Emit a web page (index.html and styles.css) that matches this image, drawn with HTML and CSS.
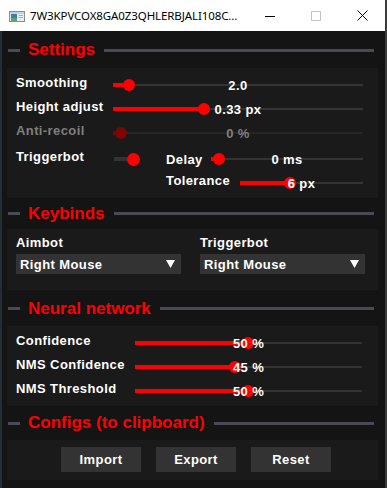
FILE: index.html
```html
<!DOCTYPE html>
<html lang="en">
<head>
  <meta charset="UTF-8">
  <title>7W3KPVCOX8GA0Z3QHLERBJALI108C</title>
  <link rel="stylesheet" href="styles.css">
</head>
<body>
  <div class="window">
    <!-- title bar -->
    <div class="titlebar">
      <svg class="app-icon" width="16" height="11" viewBox="0 0 16 11">
        <rect x="0.5" y="0.5" width="15" height="10" fill="#e8eef3" stroke="#8c8c8c" />
        <rect x="1" y="1" width="14" height="2" fill="#c9d3db" />
        <rect x="2" y="3" width="6" height="7" fill="#3f7fb0" />
        <rect x="2" y="7" width="6" height="3" fill="#5aa870" />
        <rect x="10" y="4" width="4" height="1" fill="#9fb2c2" />
        <rect x="10" y="6" width="4" height="1" fill="#9fb2c2" />
      </svg>
      <span class="title">7W3KPVCOX8GA0Z3QHLERBJALI108C...</span>
      <div class="caption">
        <span class="cap-btn">
          <svg width="10" height="10" viewBox="0 0 10 10"><path d="M0 5.5h10" stroke="#000" stroke-width="1" /></svg>
        </span>
        <span class="cap-btn">
          <svg width="10" height="10" viewBox="0 0 10 10"><rect x="0.5" y="0.5" width="9" height="9" fill="none" stroke="#c4c4c4" stroke-width="1" /></svg>
        </span>
        <span class="cap-btn">
          <svg width="11" height="11" viewBox="0 0 11 11"><path d="M0.5 0.5l10 10M10.5 0.5l-10 10" stroke="#000" stroke-width="1" /></svg>
        </span>
      </div>
    </div>

    <div class="client">
      <!-- Settings -->
      <div class="section-head head-settings"><span>Settings</span></div>
      <div class="panel settings">
        <div class="row">
          <span class="label">Smoothing</span>
          <div class="slider">
            <div class="fill" style="width:6.4%"></div>
            <span class="knob" style="left:6.4%"></span>
            <span class="value">2.0</span>
          </div>
        </div>
        <div class="row">
          <span class="label">Height adjust</span>
          <div class="slider">
            <div class="fill" style="width:36.4%"></div>
            <span class="knob" style="left:36.4%"></span>
            <span class="value">0.33 px</span>
          </div>
        </div>
        <div class="row disabled">
          <span class="label">Anti-recoil</span>
          <div class="slider">
            <div class="fill" style="width:3.2%"></div>
            <span class="knob" style="left:3.2%"></span>
            <span class="value">0 %</span>
          </div>
        </div>
        <div class="row row-trigger">
          <span class="label">Triggerbot</span>
          <div class="sub">
            <span class="toggle"><span class="toggle-knob"></span></span>
            <span class="sub-label delay">Delay</span>
            <div class="slider">
              <div class="fill" style="width:5.3%"></div>
              <span class="knob" style="left:5.3%"></span>
              <span class="value">0 ms</span>
            </div>
          </div>
        </div>
        <div class="row">
          <span class="label"></span>
          <div class="sub">
            <span class="toggle-space"></span>
            <span class="sub-label tolerance">Tolerance</span>
            <div class="slider">
              <div class="fill" style="width:40.6%"></div>
              <span class="knob" style="left:40.6%"></span>
              <span class="value">6 px</span>
            </div>
          </div>
        </div>
      </div>

      <!-- Keybinds -->
      <div class="section-head head-keys"><span>Keybinds</span></div>
      <div class="panel keybinds">
        <div class="bind">
          <span class="bind-label">Aimbot</span>
          <div class="combo">
            <span>Right Mouse</span>
            <svg class="arrow" width="9" height="8" viewBox="0 0 9 8"><path d="M0 0h9L4.5 8z" fill="#fff" /></svg>
          </div>
        </div>
        <div class="bind">
          <span class="bind-label">Triggerbot</span>
          <div class="combo">
            <span>Right Mouse</span>
            <svg class="arrow" width="9" height="8" viewBox="0 0 9 8"><path d="M0 0h9L4.5 8z" fill="#fff" /></svg>
          </div>
        </div>
      </div>

      <!-- Neural network -->
      <div class="section-head head-nn"><span>Neural network</span></div>
      <div class="panel neural">
        <div class="row">
          <span class="label">Confidence</span>
          <div class="slider">
            <div class="fill" style="width:49.8%"></div>
            <span class="knob" style="left:49.8%"></span>
            <span class="value">50 %</span>
          </div>
        </div>
        <div class="row">
          <span class="label">NMS Confidence</span>
          <div class="slider">
            <div class="fill" style="width:44%"></div>
            <span class="knob" style="left:44%"></span>
            <span class="value">45 %</span>
          </div>
        </div>
        <div class="row">
          <span class="label">NMS Threshold</span>
          <div class="slider">
            <div class="fill" style="width:49.8%"></div>
            <span class="knob" style="left:49.8%"></span>
            <span class="value">50 %</span>
          </div>
        </div>
      </div>

      <!-- Configs -->
      <div class="section-head head-cfg"><span>Configs (to clipboard)</span></div>
      <div class="panel configs">
        <button class="btn">Import</button>
        <button class="btn">Export</button>
        <button class="btn">Reset</button>
      </div>
    </div>
  </div>
</body>
</html>
```

FILE: styles.css
```css
/* page */
html, body { margin: 0; padding: 0; width: 100%; height: 100%; background: #151515; overflow: hidden; }
body { font-family: "Liberation Sans", Arial, sans-serif; }
.window { width: 385px; height: 488px; border-right: 2px solid #3c3c3c; display: flex; flex-direction: column; }

/* title bar */
.titlebar { height: 31px; background: #fff; display: flex; align-items: center; padding-left: 9px; flex-shrink: 0; }
.app-icon { display: block; margin-top: 1px; }
.title { margin-left: 5px; font-family: "Noto Sans", "Open Sans", sans-serif; font-size: 11.5px; color: #000; letter-spacing: -0.1px; white-space: nowrap; }
.caption { margin-left: auto; display: flex; height: 100%; }
.cap-btn { width: 46px; height: 100%; display: flex; align-items: center; justify-content: center; }
.cap-btn svg { display: block; }

/* client area */
.client { flex: 1; border-left: 2px solid #272b33; background: #141414; }

/* section headers */
.section-head { display: flex; align-items: center; padding: 0 11px 0 6px; color: #ff0000; font-weight: bold; font-size: 17px; }
.section-head::before { content: ""; width: 12px; height: 3px; background: #4a4a54; margin-right: 8px; }
.section-head::after { content: ""; flex: 1; height: 3px; background: #4a4a54; margin-left: 9px; }
.head-settings { height: 36px; padding-top: 1px; }
.head-keys { height: 31px; }
.head-nn { height: 35px; padding-top: 1px; }
.head-cfg { height: 34px; }

/* panels */
.panel { margin-left: 5px; width: 371px; background: #1a1a1a; box-sizing: border-box; color: #fff; font-weight: bold; font-size: 13px; letter-spacing: 0.4px; }
.settings { height: 130px; padding: 5px 0 0 9px; }
.keybinds { height: 61px; padding: 6px 0 0 9px; display: grid; grid-template-columns: 165px 165px; column-gap: 19px; align-content: start; }
.neural { height: 80px; padding: 5px 0 0 9px; }
.configs { height: 40px; padding: 7px 0 0 54px; display: flex; gap: 15px; align-items: flex-start; }

/* rows */
.row { display: grid; grid-template-columns: 97px 250px; align-items: center; height: 24px; }
.neural .row { grid-template-columns: 119px 227px; }
.row-trigger { margin-top: 2px; }
.label { padding-bottom: 5px; white-space: nowrap; }
.disabled { color: #7f7f7f; }

/* slider */
.slider { position: relative; display: grid; align-items: center; height: 16px; }
.slider::before { content: ""; grid-area: 1 / 1; height: 2px; background: #333; }
.slider > * { grid-area: 1 / 1; }
.fill { height: 4px; background: #ff0000; justify-self: start; }
.knob { position: absolute; top: 50%; width: 12px; height: 12px; border-radius: 50%; background: #ff0000; transform: translate(-50%, -50%); }
.value { justify-self: center; position: relative; z-index: 1; white-space: nowrap; }
.disabled .slider::before { background: #262626; }
.disabled .fill, .disabled .knob { background: #7a0606; }

/* triggerbot row */
.sub { display: flex; align-items: center; }
.sub .slider { flex: 1; }
.toggle { width: 53px; height: 16px; display: flex; align-items: center; }
.toggle::before { content: ""; width: 13px; height: 4px; background: #333; margin-left: 1px; }
.toggle-knob { width: 13px; height: 13px; border-radius: 50%; background: #ff0000; }
.toggle-space { width: 53px; }
.sub-label { white-space: nowrap; }
.delay { width: 45px; }
.tolerance { width: 74px; padding-bottom: 5px; }

/* keybinds */
.bind { display: flex; flex-direction: column; }
.bind-label { height: 16px; line-height: 16px; }
.combo { margin-top: 3px; height: 20px; background: #333; display: flex; align-items: center; justify-content: space-between; padding: 0 6px 0 4px; }
.arrow { display: block; }

/* buttons */
.btn { width: 80px; height: 25px; border: 0; background: #333; color: #fff; font-family: inherit; font-weight: bold; font-size: 13px; letter-spacing: 0.4px; padding: 0; }
```
